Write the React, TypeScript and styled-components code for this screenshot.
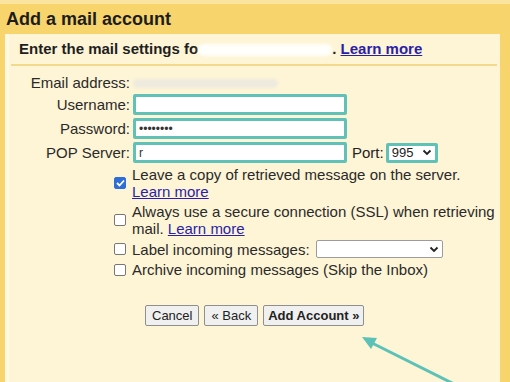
import styled, { createGlobalStyle } from 'styled-components';

const GlobalStyle = createGlobalStyle`
  html, body {
    margin: 0;
    padding: 0;
    background: #f8d46c;
    overflow: hidden;
  }
  body {
    font-family: "Liberation Sans", Arial, sans-serif;
    color: #222;
  }
`;

const Page = styled.div`
  position: relative;
  width: 510px;
  height: 382px;
  box-sizing: border-box;
  border-top: 4px solid #fbe4a0;
  padding: 0 10px 0 5px;
  display: flex;
  flex-direction: column;
  overflow: hidden;
`;

const Title = styled.h1`
  margin: 0;
  padding: 5px 0 0 1px;
  height: 25px;
  font-size: 18px;
  font-weight: bold;
  color: #1d1d1d;
`;

const Panel = styled.div`
  flex: 1;
  background: #fef5d6;
  border-left: 4px solid #fff9e4;
  padding: 0 3px 0 0;
`;

const Header = styled.div`
  margin: 0 0 0 2px;
  padding: 6px 0 6px 8px;
  border-bottom: 2px solid #f3d98c;
  font-size: 15px;
  font-weight: bold;
  color: #1f1f1f;
  line-height: 18px;
`;

const Link = styled.a`
  color: #2a1fa8;
  text-decoration: underline;
  cursor: pointer;
`;

const Smudge = styled.span<{ $w: number; $h?: number; $tint?: string }>`
  display: inline-block;
  width: ${p => p.$w}px;
  height: ${p => p.$h ?? 14}px;
  vertical-align: middle;
  background: ${p => p.$tint ?? 'rgba(255, 255, 255, 0.92)'};
  border-radius: 7px;
  filter: blur(1.5px);
`;

const Form = styled.div`
  display: grid;
  grid-template-columns: 121px 1fr;
  column-gap: 3px;
  row-gap: 3px;
  padding-top: 9px;
  font-size: 15px;
  align-items: center;
`;

const Label = styled.div<{ $tight?: boolean }>`
  text-align: right;
  line-height: ${p => (p.$tight ? 16 : 21)}px;
  color: #2a2a2a;
`;

const Value = styled.div`
  display: flex;
  align-items: center;
  gap: 5px;
  line-height: 18px;
`;

const Field = styled.div<{ $w: number }>`
  width: ${p => p.$w}px;
  height: 21px;
  box-sizing: border-box;
  border: 3px solid #5fc1b7;
  border-radius: 2px;
  background: #fff;
  display: flex;
  align-items: center;
  padding-left: 3px;
  font-size: 12px;
  color: #333;
`;

const Select = styled.div<{ $w: number; $teal?: boolean }>`
  width: ${p => p.$w}px;
  height: ${p => (p.$teal ? 20 : 18)}px;
  box-sizing: border-box;
  margin-left: ${p => (p.$teal ? -3 : 0)}px;
  border: ${p => (p.$teal ? '3px solid #5fc1b7' : '1px solid #9c9c9c')};
  border-radius: 2px;
  background: #fff;
  display: flex;
  align-items: center;
  justify-content: space-between;
  padding: 0 3px 0 3px;
  font-size: 13px;
  color: #222;
`;

const Chevron = () => (
  <svg width="10" height="7" viewBox="0 0 10 7">
    <path d="M1.5 1.5 L5 5 L8.5 1.5" fill="none" stroke="#222" strokeWidth="1.8" />
  </svg>
);

const Options = styled.div`
  display: flex;
  flex-direction: column;
  gap: 3px;
  margin: 3px 0 0 105px;
  font-size: 15px;
  line-height: 17px;
  color: #2a2a2a;
`;

const Option = styled.label`
  display: flex;
  align-items: center;
  gap: 6px;
`;

const Box = styled.span<{ $checked?: boolean }>`
  flex: none;
  width: 12px;
  height: 12px;
  box-sizing: border-box;
  border-radius: 2px;
  border: 1px solid ${p => (p.$checked ? '#2f6ed8' : '#777')};
  background: ${p => (p.$checked ? '#2f6ed8' : '#fff')};
  display: flex;
  align-items: center;
  justify-content: center;
`;

const Buttons = styled.div`
  display: flex;
  gap: 5px;
  margin: 27px 0 0 136px;
`;

const Button = styled.button<{ $primary?: boolean }>`
  height: 21px;
  padding: 0 ${p => (p.$primary ? 4 : 6)}px;
  font-family: "Liberation Sans", Arial, sans-serif;
  font-size: 13px;
  font-weight: ${p => (p.$primary ? 'bold' : 'normal')};
  color: #222;
  background: #f0f0f0;
  border: 1px solid #8f8f8f;
  border-radius: 2px;
`;

const Arrow = styled.svg`
  position: absolute;
  left: 0;
  top: 0;
  pointer-events: none;
`;

export default function App() {
  return (
    <>
      <GlobalStyle />
      <Page>
        <Title>Add a mail account</Title>
        <Panel>
          <Header>
            Enter the mail settings fo<Smudge $w={134} $h={12} />. <Link>Learn more</Link>
          </Header>
          <Form>
            <Label $tight>Email address:</Label>
            <Value>
              <Smudge $w={145} $h={9} $tint="rgba(236, 233, 222, 0.95)" />
            </Value>
            <Label>Username:</Label>
            <Value>
              <Field $w={214} />
            </Value>
            <Label>Password:</Label>
            <Value>
              <Field $w={214}>••••••••</Field>
            </Value>
            <Label>POP Server:</Label>
            <Value>
              <Field $w={214}>r</Field>
              <span>Port:</span>
              <Select $w={52} $teal>
                995
                <Chevron />
              </Select>
            </Value>
          </Form>
          <Options>
            <Option>
              <Box $checked>
                <svg width="9" height="8" viewBox="0 0 9 8">
                  <path d="M1 4 L3.5 6.5 L8 1.5" fill="none" stroke="#fff" strokeWidth="1.8" />
                </svg>
              </Box>
              <span>
                Leave a copy of retrieved message on the server.
                <br />
                <Link>Learn more</Link>
              </span>
            </Option>
            <Option>
              <Box />
              <span>
                Always use a secure connection (SSL) when retrieving
                <br />
                mail. <Link>Learn more</Link>
              </span>
            </Option>
            <Option>
              <Box />
              <span>Label incoming messages:</span>
              <Select $w={127}>
                <span>&nbsp;</span>
                <Chevron />
              </Select>
            </Option>
            <Option>
              <Box />
              <span>Archive incoming messages (Skip the Inbox)</span>
            </Option>
          </Options>
          <Buttons>
            <Button>Cancel</Button>
            <Button>« Back</Button>
            <Button $primary>Add Account »</Button>
          </Buttons>
        </Panel>
        <Arrow width="510" height="382" viewBox="0 0 510 382">
          <line x1="462" y1="384" x2="370" y2="338" stroke="#5cc2b8" strokeWidth="3" />
          <path d="M362 333 L377 334 L371 345 Z" fill="#5cc2b8" />
        </Arrow>
      </Page>
    </>
  );
}
